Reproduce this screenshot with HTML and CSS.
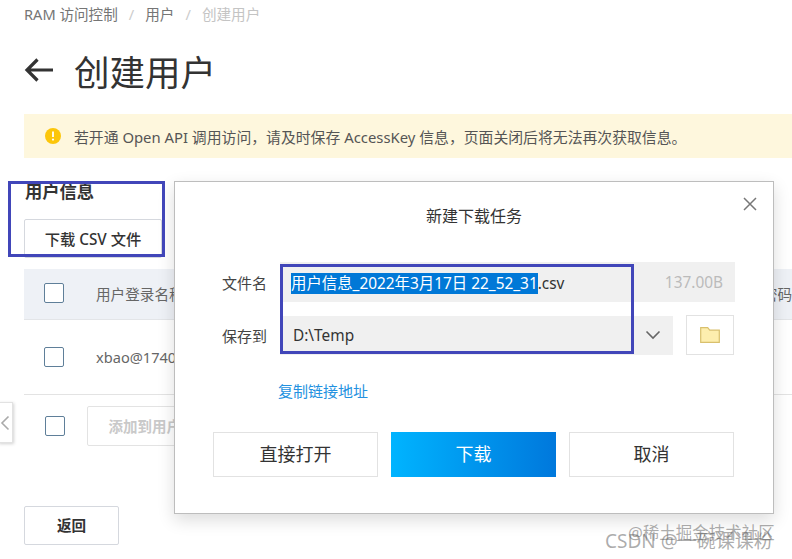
FILE: index.html
```html
<!DOCTYPE html>
<html lang="zh-CN">
<head>
<meta charset="utf-8">
<title>创建用户</title>
<link rel="stylesheet" href="styles.css">
</head>
<body>
<main class="page">
  <nav class="crumbs"><span>RAM 访问控制</span><i>/</i><span>用户</span><i>/</i><span class="crumb-now">创建用户</span></nav>
  <header class="title-row">
    <svg class="back" viewBox="0 0 30 26" width="30" height="26"><path d="M29 13H3M13.5 2.5 3 13l10.5 10.500" fill="none" stroke="#333" stroke-width="3.200"/></svg>
    <h1>创建用户</h1>
  </header>
  <div class="alert">
    <svg class="alert-icon" viewBox="0 0 16 16" width="16" height="16"><circle cx="8" cy="8" r="8" fill="#fcc60a"/><path d="M8 3.5v5.5" stroke="#fff" stroke-width="1.8"/><circle cx="8" cy="11.6" r="1.1" fill="#fff"/></svg>
    <span>若开通 Open API 调用访问，请及时保存 AccessKey 信息，页面关闭后将无法再次获取信息。</span>
  </div>
  <h2>用户信息</h2>
  <button class="btn btn-csv">下载 CSV 文件</button>
  <div class="thead">
    <span class="check"></span><span class="cell">用户登录名称</span><span class="cell-end">密码</span>
  </div>
  <div class="trow">
    <span class="check"></span><span class="cell">xbao@1740</span>
  </div>
  <div class="tfoot">
    <span class="check check-foot"></span>
    <button class="btn btn-add">添加到用户组</button>
  </div>
  <button class="btn btn-back">返回</button>
</main>

<div class="side-tab"><svg viewBox="0 0 10 16" width="10" height="16"><path d="M8.5 1.5 2 8l6.500 6.500" fill="none" stroke="#aaa" stroke-width="1.600"/></svg></div>

<section class="dialog">
  <div class="dlg-title">新建下载任务</div>
  <svg class="dlg-close" viewBox="0 0 14 14" width="14" height="14"><path d="M1 1l12 12M13 1 1 13" stroke="#777" stroke-width="1.500"/></svg>
  <div class="form-row">
    <label>文件名</label>
    <div class="field field-name"><span><span class="sel">用户信息_2022年3月17日 22_52_31</span>.csv</span><span class="size">137.00B</span></div>
  </div>
  <div class="form-row form-row-save">
    <label>保存到</label>
    <div class="field field-path"><span>D:\Temp</span>
      <svg viewBox="0 0 16 10" width="16" height="10"><path d="M1.500 1.500 8 8l6.500-6.500" fill="none" stroke="#666" stroke-width="1.600"/></svg>
    </div>
    <div class="folder-btn"><svg viewBox="0 0 20 16" width="20" height="16"><path d="M.7 15.300V.7h7l2 2.500h9.600v12.100z" fill="#fdeeae" stroke="#d9c06d" stroke-width="1.200"/></svg></div>
  </div>
  <a class="copy-link">复制链接地址</a>
  <div class="dlg-actions">
    <button class="dbtn">直接打开</button>
    <button class="dbtn dbtn-primary">下载</button>
    <button class="dbtn">取消</button>
  </div>
</section>

<div class="mark mark-left"></div>
<div class="mark mark-right"></div>
<div class="wm wm-a">@稀土掘金技术社区</div>
<div class="wm wm-b">CSDN @一碗课课粉</div>
</body>
</html>
```

FILE: styles.css
```css
* { box-sizing: border-box; }
html, body { margin: 0; padding: 0; }
body {
  width: 792px; height: 559px; overflow: hidden; position: relative; background: #fff;
  font-family: "Noto Sans", "Noto Sans CJK SC", sans-serif; color: #333; font-size: 14.6px;
}
.page { padding: 4px 0 0 24px; display: flex; flex-direction: column; align-items: flex-start; }
.crumbs { height: 20px; line-height: 20px; display: flex; gap: 11px; color: #757575; font-size: 14.6px; white-space: nowrap; }
.crumbs i { font-style: normal; color: #ccc; }
.crumb-now { color: #c4c4c4; }
.title-row { height: 50px; margin-top: 21px; display: flex; align-items: center; gap: 20px; }
.back { display: block; }
h1 { margin: 0; padding-top: 4px; font-size: 35.5px; font-weight: 400; line-height: 50px; color: #333; }
.alert {
  margin-top: 19px; width: 768px; height: 44px; background: #fef7dd; display: flex; align-items: center;
  gap: 13px; padding-left: 21px; color: #555; white-space: nowrap; font-size: 14.85px;
}
h2 { margin: 22px 0 0 1px; font-size: 17.3px; line-height: 24px; font-weight: 700; color: #333; }
.btn { background: #fff; border: 1px solid #d5d8de; border-radius: 2px; font: inherit; font-weight: 500; color: #333; padding: 0 0 2px; }
.btn-csv { margin-top: 15px; width: 138px; height: 39px; font-size: 15.3px; }
.thead, .trow, .tfoot { display: flex; align-items: center; width: 768px; }
.thead { margin-top: 11px; height: 51px; background: #eef1f6; padding: 0 0 2px 20px; border-bottom: 1px solid #e3e5e8; }
.trow { height: 75px; padding-left: 20px; border-bottom: 1px solid #e3e3e3; }
.check { width: 20px; height: 20px; border: 1px solid #5f7f99; border-radius: 2px; background: #fff; flex: none; }
.cell { margin-left: 32px; color: #666; white-space: nowrap; }
.cell-end { margin-left: auto; color: #666; white-space: nowrap; }
.tfoot { height: 50px; padding-left: 21px; margin-top: 6px; }
.btn-add { margin-left: 22px; width: 130px; height: 40px; color: #c9c9c9; font-weight: 700; font-size: 14.5px; border-color: #e3e3e3; }
.btn-back { margin-top: 55px; width: 95px; height: 39px; font-weight: 700; }

.side-tab {
  position: absolute; left: -2px; top: 402px; width: 15px; height: 41px; background: #fff;
  border: 1px solid #e2e2e2; box-shadow: 1px 1px 3px rgba(0,0,0,.18); display: flex; align-items: center; padding-left: 1px;
}
.dialog {
  position: absolute; left: 174px; top: 181px; width: 600px; height: 333px; background: #fff;
  border: 1px solid #bdbdbd; box-shadow: 0 6px 16px rgba(0,0,0,.14);
  padding: 0 38px;
}
.dlg-title { text-align: center; margin-top: 23px; height: 22px; line-height: 22px; font-size: 16px; color: #333; }
.dlg-close { position: absolute; right: 16px; top: 15px; }
.form-row { display: flex; align-items: center; margin-top: 35px; margin-left: 9px; }
.form-row label { width: 58px; color: #444; flex: none; font-size: 15px; }
.form-row-save { margin-top: 13px; }
.field { background: #f0f0f0; display: flex; align-items: center; justify-content: space-between; height: 40px; font-size: 15.4px; color: #333; padding-left: 11px; }
.field-name { width: 456px; padding-right: 12px; }
.sel { background: #0078d7; color: #fff; }
.size { color: #bbb; }
.field-path { width: 393px; height: 39px; padding: 0 12px 0 13px; }
.folder-btn { margin-left: 13px; width: 48px; height: 40px; border: 1px solid #e2e2e2; display: flex; align-items: center; justify-content: center; }
.copy-link { display: block; margin: 26px 0 0 65px; height: 20px; line-height: 20px; color: #2391e0; font-size: 15px; }
.dlg-actions { display: flex; gap: 13px; margin-top: 31px; }
.dbtn { width: 165px; height: 45px; background: #fff; border: 1px solid #e2e2e2; font: inherit; font-size: 18px; color: #333; padding: 0 0 3px; }
.dbtn-primary { background: linear-gradient(90deg, #00b4ff, #0078dc); border: 0; color: #fff; }

.mark { position: absolute; border: 3px solid #4146b9; }
.mark-left { left: 8px; top: 181px; width: 157px; height: 76px; }
.mark-right { left: 280px; top: 264px; width: 354px; height: 90px; }
.wm { position: absolute; color: rgba(90,90,90,.5); white-space: nowrap; }
.wm-a { left: 628px; top: 523px; font-size: 16.5px; line-height: 20px; }
.wm-b { left: 605px; top: 530px; font-size: 19px; line-height: 22px; }
```
